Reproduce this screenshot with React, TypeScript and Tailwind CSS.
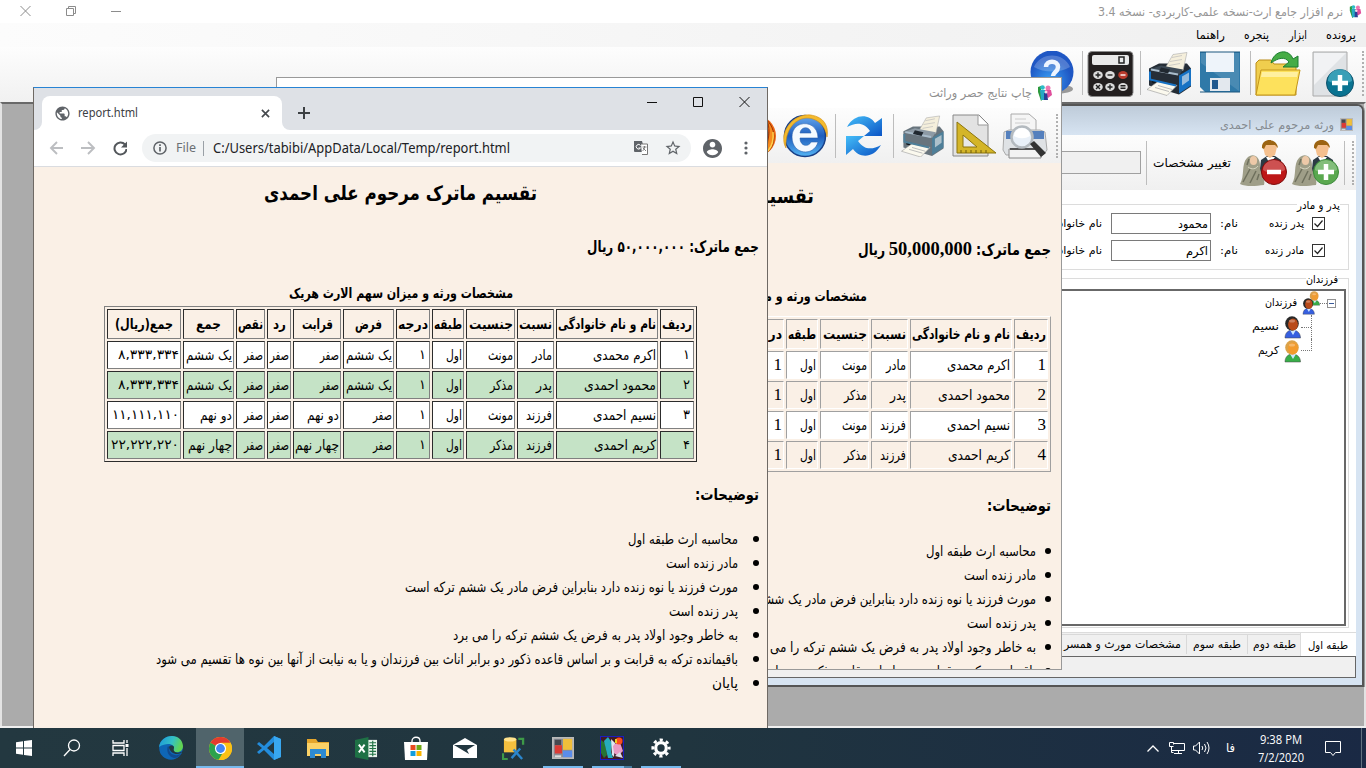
import { useLayoutEffect, useRef } from "react";
import type { ReactNode } from "react";

const FA = "font-['DejaVu_Sans',sans-serif]";

/** One line of text, condensed or stretched to a given width. */
function Fit({ w, children, cls = "", rtl = true }: { w: number; children: ReactNode; cls?: string; rtl?: boolean }) {
  const ref = useRef<HTMLSpanElement>(null);
  useLayoutEffect(() => {
    const el = ref.current;
    if (!el) return;
    el.style.transform = "none";
    const natural = el.getBoundingClientRect().width;
    if (natural > 0) el.style.transform = `scaleX(${w / natural})`;
  }, [w, children]);
  return (
    <span dir="ltr" className={`inline-flex shrink-0 items-center justify-start whitespace-nowrap ${FA} ${cls}`} style={{ width: w }}>
      <span ref={ref} dir={rtl ? "rtl" : "ltr"} className="inline-block shrink-0 origin-left">
        {children}
      </span>
    </span>
  );
}

const WIDTHS: Record<string, number> = {
  "ردیف": 30, "نام و نام خانوادگی": 98, "نسبت": 33, "جنسیت": 44, "طبقه": 28, "درجه": 30, "فرض": 27, "قرابت": 31,
  "رد": 13, "نقص": 25, "جمع": 25, "جمع(ریال)": 58, "اکرم محمدی": 63, "محمود احمدی": 72, "نسیم احمدی": 63,
  "کریم احمدی": 62, "مادر": 20, "پدر": 16, "فرزند": 26, "مونث": 25, "مذکر": 23, "اول": 16, "یک ششم": 46, "صفر": 19,
  "دو نهم": 32, "چهار نهم": 44, "۸,۳۳۳,۳۳۴": 61, "۱۱,۱۱۱,۱۱۰": 67, "۲۲,۲۲۲,۲۲۰": 68,
};
const HEAD = ["ردیف", "نام و نام خانوادگی", "نسبت", "جنسیت", "طبقه", "درجه", "فرض", "قرابت", "رد", "نقص", "جمع", "جمع(ریال)"];
const ROWS = [
  ["۱", "اکرم محمدی", "مادر", "مونث", "اول", "۱", "یک ششم", "صفر", "صفر", "صفر", "یک ششم", "۸,۳۳۳,۳۳۴"],
  ["۲", "محمود احمدی", "پدر", "مذکر", "اول", "۱", "یک ششم", "صفر", "صفر", "صفر", "یک ششم", "۸,۳۳۳,۳۳۴"],
  ["۳", "نسیم احمدی", "فرزند", "مونث", "اول", "۱", "صفر", "دو نهم", "صفر", "صفر", "دو نهم", "۱۱,۱۱۱,۱۱۰"],
  ["۴", "کریم احمدی", "فرزند", "مذکر", "اول", "۱", "صفر", "چهار نهم", "صفر", "صفر", "چهار نهم", "۲۲,۲۲۲,۲۲۰"],
];
const NOTES: [string, number][] = [
  ["محاسبه ارث طبقه اول", 110],
  ["مادر زنده است", 72],
  ["مورث فرزند یا نوه زنده دارد بنابراین فرض مادر یک ششم ترکه است", 333],
  ["پدر زنده است", 69],
  ["به خاطر وجود اولاد پدر به فرض یک ششم ترکه را می برد", 285],
  ["باقیمانده ترکه به قرابت و بر اساس قاعده ذکور دو برابر اناث بین فرزندان و یا به نیابت از آنها بین نوه ها تقسیم می شود", 582],
  ["پایان", 26],
];
const toLatin = (s: string) => String("۰۱۲۳۴۵۶۷۸۹".indexOf(s));

function ReportTable({ chrome }: { chrome: boolean }) {
  const cell = chrome
    ? "border-t-[#2c2c2c] border-l-[#2c2c2c] border-b-[#808080] border-r-[#808080]"
    : "border-t-[#a0a0a0] border-l-[#a0a0a0] border-b-white border-r-white";
  const outer = chrome
    ? "border-t-[#808080] border-l-[#808080] border-b-[#2c2c2c] border-r-[#2c2c2c]"
    : "border-t-white border-l-white border-b-[#a0a0a0] border-r-[#a0a0a0]";
  return (
    <div dir="rtl" className={`grid w-[593px] shrink-0 grid-cols-[34px_102px_37px_49px_32px_34px_51px_48px_24px_29px_51px_74px] gap-[2px] border p-[2px] ${outer}`}>
      {HEAD.map((h) => (
        <div key={h} className={`flex h-[30px] items-center justify-center border ${cell}`}>
          <Fit w={WIDTHS[h]} cls="text-[14px] font-bold">{h}</Fit>
        </div>
      ))}
      {ROWS.map((r, i) =>
        r.map((c, j) => (
          <div key={`${i}-${j}`} className={`flex h-[28px] items-center justify-start border ${c.length === 1 ? (chrome ? "pr-[3px]" : "pr-[1px]") : "pr-px"} ${cell} ${i % 2 === 0 ? "bg-white" : chrome ? "bg-[#c5e3c6]" : ""}`}>
            {c.length > 1 ? (
              <Fit w={WIDTHS[c]} cls={j === 11 ? "text-[13px]" : "text-[14px]"}>{c}</Fit>
            ) : chrome ? (
              <span className={`text-[13px] ${FA}`}>{c}</span>
            ) : (
              <span className="font-['Liberation_Serif',serif] text-[17px]">{toLatin(c)}</span>
            )}
          </div>
        )),
      )}
    </div>
  );
}

function Notes({ pad }: { pad: string }) {
  return (
    <ul dir="rtl" className={`shrink-0 ${pad}`}>
      {NOTES.map(([t, w]) => (
        <li key={t} className="flex h-[24px] items-center">
          <span className="size-[6px] shrink-0 rounded-full bg-black" />
          <Fit w={w} cls="text-[14px]">{t}</Fit>
        </li>
      ))}
    </ul>
  );
}

/* ---------- icons ---------- */
function FamilyIcon({ cls }: { cls: string }) {
  return (
    <svg viewBox="0 0 16 16" className={cls}>
      <path d="M1 2l3-1v6l2 7-2 2-3-9z" fill="#2c9a3e" />
      <circle cx="5.500" cy="2.500" r="2.300" fill="#2cbcc8" /><path d="M3 5h6v6l-2 4H4z" fill="#27a9c4" />
      <circle cx="11" cy="3" r="2.500" fill="#ec7ab2" /><path d="M8 5h6l1 5-4 3-3-3z" fill="#e04f9c" />
      <path d="M7 8h3l1 7H7z" fill="#2b3f96" /><circle cx="9" cy="7" r="1.500" fill="#fff" opacity=".8" />
    </svg>
  );
}
function Help() {
  return (
    <svg viewBox="0 0 44 44" className="h-[44px] w-[44px] shrink-0">
      <defs><radialGradient id="hb" cx=".45" cy=".7"><stop offset="0" stopColor="#3aa0f5" /><stop offset="1" stopColor="#1f57c4" /></radialGradient></defs>
      <ellipse cx="25" cy="38" rx="18" ry="5" fill="#999" /><circle cx="22" cy="21" r="21.500" fill="url(#hb)" /><path d="M4 16a19 17 0 0136 0c-10 6-26 6-36 0z" fill="#fff" opacity=".22" />
      <path d="M16 16c0-7 12-7 12 0 0 5-5 5-5 9" fill="none" stroke="#eef5ff" strokeWidth="4.500" /><circle cx="23" cy="31" r="2.600" fill="#fff" />
    </svg>
  );
}
function Calculator() {
  return (
    <svg viewBox="0 0 48 46" className="h-[46px] w-[48px] shrink-0">
      <rect x="1" y=".5" width="45" height="45" rx="4" fill="#231f1f" stroke="#8c8c8c" />
      <rect x="5" y="4" width="37" height="10" rx="2" fill="#e9e9e9" /><path d="M32 6h5v6h-5z" fill="none" stroke="#222" strokeWidth="1.500" />
      {[24, 36].map((y) => [11, 23, 36].map((x) => {
        const red = x === 36 && y === 24;
        const glyph =
          x === 11 && y === 36
            ? `M${x - 2} ${y - 2}l4 4M${x + 2} ${y - 2}l-4 4`
            : (x === 11 && y === 24) || (x === 23 && y === 36)
              ? `M${x - 2.5} ${y}h5M${x} ${y - 2.5}v5`
              : x === 36 && y === 36
                ? `M${x - 2.5} ${y - 1.2}h5M${x - 2.5} ${y + 1.2}h5`
                : `M${x - 2.5} ${y}h5`;
        return (
          <g key={`${x}${y}`}><ellipse cx={x} cy={y} rx="4.800" ry="4" fill={red ? "#b93b2d" : "#ddd"} /><path d={glyph} stroke={red ? "#fff" : "#222"} strokeWidth="1.400" /></g>
        );
      }))}
    </svg>
  );
}
function Printer({ body, side, top, cls }: { body: string; side: string; top: string; cls: string }) {
  return (
    <svg viewBox="0 0 46 44" className={cls}>
      <path d="M3 17l10-5h28l4 5v18l-12 8L3 34z" fill={body} /><path d="M33 24l12-7v17l-12 8z" fill={side} />
      <path d="M36 25l7-4v8l-7 5z" fill="#ececec" opacity=".6" />
      <path d="M19 17l8-14L41 1l-4 18z" fill="#f5efdc" stroke="#aaa" strokeWidth=".6" /><path d="M26 6l10-2M24 10l12-2M23 14l11-2" stroke="#bbb" strokeWidth=".7" />
      <path d="M3 18l12-4 22 4-4 6z" fill={top} /><path d="M5 18l27 5" stroke="#a9bccb" strokeWidth="2" /><path d="M15 16l9 2-2 4-9-2z" fill="#202830" />
      <path d="M6 28l22 5v4L6 31z" fill="#11161a" /><path d="M12 30l19 4-10 10L1 38z" fill="#fbf9ee" stroke="#999" strokeWidth=".6" /><path d="M9 36l14 4M12 34l14 4" stroke="#bbb" />
      <path d="M4 20v8l26 6" fill="none" stroke={side} strokeWidth="2" />
    </svg>
  );
}
function Floppy() {
  return (
    <svg viewBox="0 0 40 42" className="h-[42px] w-[40px] shrink-0">
      <path d="M0 1h40v40H5l-5-5z" fill="#2f79a8" /><path d="M1 2h38v38L1 12z" fill="#fff" opacity=".13" />
      <path d="M6 1h28v20H6z" fill="#eef4fa" /><path d="M10 27h20v13H10z" fill="#e3e8ee" /><path d="M12 29h6v9h-6z" fill="#1f588f" /><path d="M0 1h40M0 41h40" stroke="#1b567f" />
    </svg>
  );
}
function Folder() {
  return (
    <svg viewBox="0 0 48 45" className="h-[45px] w-[48px] shrink-0">
      <path d="M2 44V12l3-3h12l3 4h22v31z" fill="#f0ce4e" stroke="#bb8d18" /><path d="M2 44l5-25h39l-5 25z" fill="#fde15c" stroke="#c4961a" /><path d="M8 21h36l-1 5H7z" fill="#fff0a0" />
      <path d="M17 12C20-1 35-3 39 8l5-3v11H29l6-5c-4-6-11-4-18 1z" fill="#46ac46" stroke="#1d7f32" />
    </svg>
  );
}
function NewDoc() {
  return (
    <svg viewBox="0 0 42 46" className="h-[46px] w-[42px] shrink-0">
      <path d="M1 1h34v44H1z" fill="#dfe2e5" stroke="#aaa" /><path d="M2 2h32L2 34z" fill="#f1f2f4" />
      <circle cx="28" cy="32" r="13.500" fill="#0a7391" stroke="#10536d" /><path d="M16 30a12 12 0 0124 0c-7 4-17 4-24 0z" fill="#58bcd0" opacity=".6" /><path d="M28 24v16M20 32h16" stroke="#fff" strokeWidth="4.500" />
    </svg>
  );
}
function Firefox() {
  return (
    <svg viewBox="0 0 44 44" className="h-[44px] w-[44px] shrink-0">
      <circle cx="22" cy="22" r="21" fill="#ed6815" /><circle cx="20" cy="21" r="15.500" fill="#11307c" /><path d="M34 6c12 13 8 32-8 37 10-8 8-12 9-17s2-12-1-20z" fill="#f68a1d" stroke="#9f3100" /><path d="M40 18c1 8-1 14-5 19" fill="none" stroke="#ffd04d" strokeWidth="1.500" />
    </svg>
  );
}
function IE() {
  return (
    <svg viewBox="0 0 46 46" className="h-[46px] w-[46px] shrink-0">
      <defs><linearGradient id="ieg" x2="0" y2="1"><stop stopColor="#67a9ef" /><stop offset=".5" stopColor="#1e5dbd" /><stop offset="1" stopColor="#55b5f4" /></linearGradient></defs>
      <circle cx="23" cy="23" r="20.500" fill="url(#ieg)" stroke="#183f87" strokeWidth="1.500" />
      <path d="M10 24C10 6 36 6 36 25H18c0 9 9 9 11 4h7c-4 15-26 13-26-5zm8-4h11c-1-7-10-7-11 0z" fill="#f5faff" stroke="#2b62ac" strokeWidth=".6" />
      <path d="M4 35C-4 21 10 0 29 2c13 2 18 11 16 22C43 10 30 1 17 7 7 12 3 24 4 35z" fill="#f4ba2d" stroke="#d38e12" strokeWidth=".6" />
    </svg>
  );
}
function Refresh() {
  return (
    <svg viewBox="0 0 40 40" className="h-[40px] w-[40px] shrink-0">
      <defs><linearGradient id="rf" x2="1" y2="1"><stop stopColor="#44bdf8" /><stop offset="1" stopColor="#0b54c5" /></linearGradient></defs>
      <path d="M3 11C11-3 25-2 31 7l7-5v18H20l6-5C20 6 12 6 3 11z" fill="url(#rf)" /><path d="M37 29C29 43 15 42 9 33l-7 6V20h18l-6 5c6 9 14 9 23 4z" fill="url(#rf)" />
    </svg>
  );
}
function Ruler() {
  return (
    <svg viewBox="0 0 45 44" className="h-[44px] w-[45px] shrink-0">
      <path d="M1 1h26l9 9v32H1z" fill="#e2e2e2" stroke="#888" /><path d="M26 1v10h10" fill="#fff" stroke="#999" /><path d="M5 8l39 31H5z" fill="#d4b528" stroke="#8c750c" /><path d="M11 21l14 12H11z" fill="#e8e8e8" stroke="#8c750c" /><path d="M9 39v-3m5 3v-3m5 3v-3m5 3v-3m5 3v-3m5 3v-3" stroke="#6e5c0c" />
    </svg>
  );
}
function Preview() {
  return (
    <svg viewBox="0 0 46 46" className="h-[46px] w-[46px] shrink-0">
      <path d="M9 22V1h18l7 6v15z" fill="#f5f5f5" stroke="#aaa" /><path d="M13 6h11M13 10h15" stroke="#ccc" /><path d="M2 19l5-2h31l5 2 2 18-4 5H4l-3-5z" fill="#dfe2e5" stroke="#aaa" /><path d="M4 18h38v8H4z" fill="#5580bd" /><path d="M7 36h32v9H7z" fill="#f3f3f3" stroke="#888" /><path d="M8 36h30" stroke="#333" strokeWidth="1.500" />
      <circle cx="20" cy="24" r="10.500" fill="#e9f0f8" stroke="#b4babf" strokeWidth="2.500" /><path d="M12 23a8 8 0 0116 0c-5 3-11 3-16 0z" fill="#fff" /><path d="M28 31l11 13 5-4-12-12z" fill="#333" />
    </svg>
  );
}
function Couple({ plus }: { plus: boolean }) {
  return (
    <svg viewBox="0 0 48 46" className="h-[46px] w-[48px] shrink-0">
      <path d="M20 37l2-17 6-4h8l6 4 1 17z" fill="#2c3a44" /><path d="M27 17l4 7 5-7z" fill="#fff" /><path d="M24 7c1-5 13-5 14 0l-2 8-5 3-5-3z" fill="#f5c08e" /><path d="M23 8c-1-10 15-11 16 0l-3-3-9 0-2 4z" fill="#9c6412" />
      <path d="M1 44c5-8 1-20 7-26 6-6 13-1 13 7-1 8 6 13 4 20-8 1-18 2-24-1z" fill="#9f9e88" /><ellipse cx="14.500" cy="20.500" rx="3.600" ry="4.500" fill="#edc9a8" /><path d="M4 42l7-13M11 43l6-12M8 25l2-6M18 40l2-6" stroke="#6f705d" strokeWidth="1.500" /><path d="M9 27c4 3 8 2 10-1" fill="none" stroke="#d5d4bf" />
      <circle cx="35" cy="32" r="12.500" fill={plus ? "#5aa84f" : "#bd1717"} stroke={plus ? "#3d8a3c" : "#7d0c0c"} /><path d="M24 30a11 10 0 0122 0c-7 4-16 4-22 0z" fill="#fff" opacity=".25" /><path d={plus ? "M35 24v16M27 32h16" : "M28 32h14"} stroke="#fff" strokeWidth="4.500" />
    </svg>
  );
}
function Person({ skin, hair, shirt, cls }: { skin: string; hair: string; shirt: string; cls: string }) {
  return (
    <svg viewBox="0 0 17 23" className={cls}>
      <path d="M1 22c0-5 3-8 7.500-8s8 3 8 8z" fill={shirt} stroke="#444" strokeWidth=".5" /><path d="M6 14l3 5 3-5z" fill="#cce6ff" /><ellipse cx="8" cy="7.500" rx="6.800" ry="7.200" fill={hair} /><ellipse cx="9" cy="8.500" rx="4.900" ry="6" fill={skin} /><ellipse cx="8" cy="5" rx="3" ry="1.500" fill="#fff" opacity=".3" />
    </svg>
  );
}
function FormIcon({ cls }: { cls: string }) {
  return (
    <svg viewBox="0 0 24 24" className={cls}>
      <path d="M1 1h22v22H1z" fill="#8a8d96" stroke="#b9b9b9" strokeWidth="2" /><path d="M3 3h7v6H3z" fill="#46484f" /><path d="M12 2h10v12H12z" fill="#f0bf3a" /><path d="M3 9h8v9H3z" fill="#dc3b35" /><path d="M12 15h10v7H12z" fill="#5b8dea" /><path d="M3 20h7v2H3z" fill="#ddd" />
    </svg>
  );
}

function Sep({ cls }: { cls: string }) {
  return <div className={`w-px shrink-0 bg-[#bdbdbd] ${cls}`} />;
}
function Grip({ cls }: { cls: string }) {
  return <div className={`w-0 shrink-0 border-r-2 border-dotted border-[#b0b0b0] ${cls}`} />;
}

/* ---------- main application ---------- */
function MainWindow() {
  return (
    <div className="absolute inset-x-0 top-0 flex h-[728px] flex-col bg-white">
      <div dir="rtl" className="flex h-[23px] shrink-0 items-center pr-[4px]">
        <FamilyIcon cls="h-[15px] w-[13px] shrink-0" />
        <Fit w={245} cls="mr-[6px] text-[12px] text-[#969696]">نرم افزار جامع ارث-نسخه علمی-کاربردی- نسخه 3.4</Fit>
        <svg viewBox="0 0 104 14" className="mr-auto ml-[19px] h-[14px] w-[104px] -translate-y-[1px]" fill="none" stroke="#8c8c8c">
          <path d="M1.500 2l10 10m0-10l-10 10M92 7.500h10M47.500 4.500h7v7h-7zM49.500 4.500v-2h7v7h-2" />
        </svg>
      </div>
      <div dir="rtl" className="flex h-[24px] shrink-0 items-center bg-linear-to-r from-[#fcfcfc] to-[#efefef] pr-[10px] text-[12px]">
        <Fit w={30}>پرونده</Fit>
        <Fit w={18} cls="mr-[19px]">ابزار</Fit>
        <Fit w={25} cls="mr-[20px]">پنجره</Fit>
        <Fit w={29} cls="mr-[19px]">راهنما</Fit>
      </div>
      <div dir="rtl" className="flex h-[55px] shrink-0 items-start bg-linear-to-b from-[#fdfdfd] to-[#f1f1f1] pt-[4px] pr-[2px]">
        <Grip cls="h-[45px]" />
        <div className="mr-[8px] flex"><NewDoc /></div>
        <div className="mr-[10px] flex"><Folder /></div>
        <Sep cls="mr-[3px] h-[44px]" />
        <div className="mr-[10px] flex"><Floppy /></div>
        <Printer body="#252d36" side="#1672c4" top="#3b4854" cls="mr-[8px] h-[45px] w-[46px] shrink-0" />
        <Sep cls="mr-[5px] h-[44px]" />
        <div className="mr-[5px] flex"><Calculator /></div>
        <Sep cls="mr-[4px] h-[44px]" />
        <div className="mr-[8px] flex"><Help /></div>
      </div>
      <div className="min-h-0 flex-1 border-t-2 border-r-2 border-l-2 border-t-[#696969] border-r-[#e3e3e3] border-l-[#e3e3e3] bg-[#ababab]" />
      <div className="h-[2px] shrink-0 bg-[#efefef]" />
    </div>
  );
}

function Field({ label, lw, value, vw }: { label: string; lw: number; value: string; vw: number }) {
  return (
    <div className="flex h-[27px] items-center text-[11px]">
      <div className="flex size-[13px] shrink-0 items-center justify-center border border-[#333] bg-white">
        <svg viewBox="0 0 11 11" className="size-[11px]"><path d="M1.500 5.500l3 3 5-6" fill="none" stroke="#222" strokeWidth="1.200" /></svg>
      </div>
      <Fit w={lw} cls="mr-[8px] pt-px">{label}</Fit>
      <div className="mr-auto flex items-center">
        <Fit w={18} cls="pt-px">نام:</Fit>
        <div className="mr-[9px] flex h-[21px] w-[100px] shrink-0 items-center border border-[#7a7a7a] bg-white pr-[2px]">
          <Fit w={vw} cls="text-[12px]">{value}</Fit>
        </div>
        <Fit w={62} cls="mr-[9px] pt-px">نام خانوادگی:</Fit>
      </div>
    </div>
  );
}

function Legend({ w, children }: { w: number; children: string }) {
  return (
    <div className="flex h-px items-center pr-[8px]">
      <Fit w={w} cls="bg-white text-[11px] leading-[14px]">{children}</Fit>
    </div>
  );
}

function HeirsWindow() {
  const tabs: [string, number, string][] = [
    ["طبقه دوم", 43, "w-[53px] pr-[4px]"],
    ["طبقه سوم", 48, "w-[61px] pr-[6px]"],
    ["مشخصات مورث و همسر", 117, "w-[140px] pr-[5px]"],
  ];
  return (
    <div dir="rtl" className="absolute top-[104px] left-[700px] flex h-[583px] w-[664px] flex-col rounded-tr-[7px] border-2 border-l-0 border-[#555] bg-[#d7e4f2] pr-[6px] pb-[7px] shadow-[1px_0_0_#999]">
      <div className="-mr-[6px] flex h-[29px] shrink-0 items-center rounded-tr-[5px] bg-linear-to-b from-[#becbd9] to-[#d7e4f2] pt-[8px] pr-[9px]">
        <FormIcon cls="size-[13px] shrink-0" />
        <Fit w={114} cls="mr-[6px] text-[12px] text-[#858b91]">ورثه مرحوم علی احمدی</Fit>
      </div>
      <div className="flex min-h-0 flex-1 flex-col bg-white">
        <div className="flex h-[55px] shrink-0 items-center bg-linear-to-b from-[#fdfdfd] to-[#f0f0f0] pr-[2px]">
          <Grip cls="h-[44px]" />
          <Sep cls="mr-[7px] h-[44px]" />
          <div className="mr-[5px] flex"><Couple plus /></div>
          <div className="mr-[4px] flex"><Couple plus={false} /></div>
          <Fit w={78} cls="mr-[8px] text-[12px]">تغییر مشخصات</Fit>
          <Sep cls="mr-[6px] h-[44px]" />
          <div className="mr-[5px] h-[23px] flex-1 border border-[#a0a0a0] bg-[#f0f0f0]" />
        </div>
        <div className="mt-[14px] mr-[7px] h-[66px] shrink-0 border border-[#dcdcdc]">
          <Legend w={43}>پدر و مادر</Legend>
          <div className="w-[308px] pt-[4px] pr-[23px]">
            <Field label="پدر زنده" lw={35} value="محمود" vw={30} />
            <Field label="مادر زنده" lw={39} value="اکرم" vw={22} />
          </div>
        </div>
        <div className="mt-[8px] mr-[7px] h-[350px] shrink-0 border border-[#dcdcdc] pr-[2px]">
          <Legend w={32}>فرزندان</Legend>
          <div className="mt-[9px] h-[337px] border-2 border-[#686868] pr-[8px] text-[11px]">
            <div className="flex h-[24px] items-center">
              <div className="flex size-[9px] shrink-0 items-center justify-center border border-[#919191]"><div className="h-px w-[5px] bg-[#3a5a9a]" /></div>
              <div className="w-[7px] border-t border-dotted border-[#777]" />
              <div className="relative h-[24px] w-[18px] shrink-0">
                <Person skin="#ef9c32" hair="#d9a14c" shirt="#38ae49" cls="absolute top-0 right-0 h-[15px] w-[11px]" />
                <Person skin="#b94a19" hair="#292929" shirt="#365fe0" cls="absolute bottom-0 left-0 h-[17px] w-[13px]" />
              </div>
              <Fit w={32} cls="mr-[5px]">فرزندان</Fit>
            </div>
            <div className="mr-[24px]">
              <div className="flex h-[24px] items-center border-r border-dotted border-[#777]">
                <div className="w-[10px] border-t border-dotted border-[#777]" />
                <Person skin="#b94a19" hair="#292929" shirt="#365fe0" cls="h-[23px] w-[17px] shrink-0" />
                <Fit w={27} cls="mr-[5px]">نسیم</Fit>
              </div>
              <div className="flex h-[24px] items-center">
                <div className="h-[12px] w-[11px] self-start border-r border-b border-dotted border-[#777]" />
                <Person skin="#f39b2c" hair="#dca248" shirt="#38ae49" cls="h-[23px] w-[17px] shrink-0" />
                <Fit w={21} cls="mr-[5px]">کریم</Fit>
              </div>
            </div>
          </div>
        </div>
        <div className="mt-[4px] flex h-[24px] shrink-0 items-end border-t border-[#dcdcdc] bg-[#f0f0f0] text-[11px]">
          <div className="flex h-[23px] w-[56px] shrink-0 items-center border-l border-[#dcdcdc] bg-white pt-[4px] pr-[8px]"><Fit w={40}>طبقه اول</Fit></div>
          {tabs.map(([t, w, c]) => (
            <div key={t} className={`mb-[2px] flex h-[20px] shrink-0 items-center border-t border-l border-[#d9d9d9] pt-[2px] ${c}`}><Fit w={w}>{t}</Fit></div>
          ))}
        </div>
        <div className="min-h-0 flex-1 border border-[#666] bg-[#f0f0f0]" />
      </div>
    </div>
  );
}

function PrintWindow() {
  return (
    <div className="absolute top-[77px] left-[276px] flex h-[593px] w-[786px] flex-col overflow-hidden border border-[#999] bg-[#faf0e6]">
      <div dir="rtl" className="flex h-[30px] shrink-0 items-center bg-white pr-[8px]">
        <FamilyIcon cls="size-[16px] shrink-0" />
        <Fit w={103} cls="mr-[5px] text-[12px] text-[#8f8f8f]">چاپ نتایج حصر وراثت</Fit>
      </div>
      <div dir="rtl" className="flex h-[55px] shrink-0 items-center bg-linear-to-b from-[#fdfdfd] to-[#f0f0f0] pr-[3px]">
        <Grip cls="h-[44px]" />
        <div className="mr-[8px] flex"><Preview /></div>
        <div className="mr-[5px] flex"><Ruler /></div>
        <Printer body="#68747d" side="#4e7f99" top="#8d9aa5" cls="mr-[7px] h-[42px] w-[45px] shrink-0" />
        <Sep cls="mr-[6px] h-[44px]" />
        <div className="mr-[9px] flex"><Refresh /></div>
        <Sep cls="mr-[8px] h-[44px]" />
        <div className="mr-[7px] flex"><IE /></div>
        <div className="mr-[5px] flex"><Firefox /></div>
      </div>
      <div dir="rtl" className="flex h-[66px] shrink-0 items-center justify-center"><Fit w={289} cls="text-[20px] font-bold">تقسیم ماترک مرحوم علی احمدی</Fit></div>
      <div dir="rtl" className="flex h-[40px] shrink-0 items-center gap-[4px] pt-px pr-[10px]">
        <Fit w={75} cls="text-[16px] font-bold">جمع ماترک:</Fit>
        <span className="font-['Liberation_Serif',serif] text-[18.500px] font-bold">50,000,000</span>
        <Fit w={27} cls="text-[16px] font-bold">ریال</Fit>
      </div>
      <div dir="rtl" className="flex flex-col items-start pr-[10px]">
        <div className="flex h-[47px] w-[593px] items-center justify-center pt-[7px]"><Fit w={225} cls="text-[14px] font-bold">مشخصات ورثه و میزان سهم الارث هریک</Fit></div>
        <ReportTable chrome={false} />
      </div>
      <div dir="rtl" className="flex h-[67px] shrink-0 items-center pr-[10px]"><Fit w={64} cls="text-[16px] font-bold">توضیحات:</Fit></div>
      <Notes pad="pr-[10px] [&_li]:gap-[9px]" />
    </div>
  );
}

/* ---------- browser ---------- */
function Browser() {
  return (
    <div className="absolute top-[87px] left-[33px] flex h-[641px] w-[735px] flex-col overflow-hidden border border-b-0 border-[#6e6964] border-t-[#2783d4] bg-[#faf0e6]">
      <div className="flex h-[42px] shrink-0 items-end bg-[#dee1e6]">
        <div className="h-[8px] w-[8px] bg-white"><div className="size-full rounded-br-[8px] bg-[#dee1e6]" /></div>
        <div className="flex h-[34px] w-[240px] items-center rounded-t-[8px] bg-white pl-[13px]">
          <svg viewBox="0 0 24 24" className="-ml-[1px] size-[17px] shrink-0"><path fill="#5f6368" d="M12 2C6.480 2 2 6.480 2 12s4.480 10 10 10 10-4.480 10-10S17.520 2 12 2zm-1 17.930c-3.950-.49-7-3.850-7-7.930 0-.62.08-1.210.21-1.790L9 15v1c0 1.100.9 2 2 2v1.930zm6.900-2.540c-.26-.81-1-1.390-1.900-1.390h-1v-3c0-.55-.45-1-1-1H8v-2h2c.55 0 1-.45 1-1V7h2c1.100 0 2-.9 2-2v-.41c2.930 1.190 5 4.060 5 7.410 0 2.080-.8 3.970-2.100 5.390z" /></svg>
          <Fit w={60} rtl={false} cls="ml-[7px] text-[12px] text-[#3c4043] font-['Noto_Sans',sans-serif]!">report.html</Fit>
          <svg viewBox="0 0 10 10" className="mr-[12px] ml-auto size-[9px]" stroke="#45494d" strokeWidth="1.800"><path d="M1 1l8 8M9 1L1 9" /></svg>
        </div>
        <div className="h-[8px] w-[8px] bg-white"><div className="size-full rounded-bl-[8px] bg-[#dee1e6]" /></div>
        <svg viewBox="0 0 12 12" className="mb-[11px] ml-[8px] size-[12px]" stroke="#3c4043" strokeWidth="2"><path d="M6 0v12M0 6h12" /></svg>
        <svg viewBox="0 0 104 12" className="mr-[16px] mb-[22px] ml-auto h-[12px] w-[104px]" fill="none" stroke="#111"><path d="M0 6.500h10M46.500 1.500h9v9h-9zM92.500 1l10 10M102.500 1l-10 10" /></svg>
      </div>
      <div className="flex h-[36px] shrink-0 items-center bg-white pl-[15px]">
        <svg viewBox="0 0 78 16" className="h-[16px] w-[78px] shrink-0" fill="none" stroke="#bcbec1" strokeWidth="1.900">
          <path d="M14 8H2M8 2L2 8l6 6M32 8h13M39 2l6 6-6 6" /><path d="M76 4.500A6 6 0 1077.500 9" stroke="#53575b" strokeWidth="2" /><path d="M72 7.500h6v-6z" fill="#53575b" stroke="none" />
        </svg>
        <div className="ml-[15px] flex h-[28px] w-[549px] shrink-0 items-center rounded-full bg-[#f1f3f4] pl-[11px]">
          <svg viewBox="0 0 14 14" className="size-[14px]" fill="none" stroke="#5f6368" strokeWidth="1.500"><circle cx="7" cy="7" r="6.100" /><path d="M7 6v4.500M7 3.300v1.600" strokeWidth="1.700" /></svg>
          <Fit w={20} rtl={false} cls="ml-[9px] text-[13px] text-[#6b6f73] font-['Noto_Sans',sans-serif]!">File</Fit>
          <div className="ml-[7px] h-[15px] w-px bg-[#9aa0a6]" />
          <Fit w={297} rtl={false} cls="ml-[9px] text-[13.500px] text-[#202124] font-['Noto_Sans',sans-serif]!">C:/Users/tabibi/AppData/Local/Temp/report.html</Fit>
          <svg viewBox="0 0 16 16" className="ml-auto size-[16px] shrink-0"><path d="M1 1h8l3 11H2a1 1 0 01-1-1z" fill="#5f6368" /><path d="M8 4h6.500v10.500H9" fill="#fff" stroke="#777" /><path d="M7.500 5.500A2.300 2.300 0 107.500 8H5.500" fill="none" stroke="#fff" /><path d="M9.500 7h4M11.500 6v1c0 2-1 3-2 4M10 8c1 1 2 2 3 3" fill="none" stroke="#666" strokeWidth=".8" /></svg>
          <svg viewBox="0 0 24 24" className="mr-[9px] ml-[15px] size-[18px] shrink-0" fill="#5f6368"><path d="M22 9.240l-7.190-.62L12 2 9.190 8.630 2 9.240l5.460 4.730L5.820 21 12 17.270 18.180 21l-1.630-7.030L22 9.240zM12 15.400l-3.760 2.270 1-4.280-3.320-2.880 4.380-.38L12 6.100l1.710 4.040 4.380.38-3.320 2.880 1 4.280L12 15.400z" /></svg>
        </div>
        <svg viewBox="2 2 20 20" className="ml-[12px] size-[19px] shrink-0" fill="#5f6368"><path d="M12 2C6.480 2 2 6.480 2 12s4.480 10 10 10 10-4.480 10-10S17.520 2 12 2zm0 3c1.660 0 3 1.340 3 3s-1.340 3-3 3-3-1.340-3-3 1.340-3 3-3zm0 14.200c-2.500 0-4.710-1.280-6-3.220.03-1.990 4-3.080 6-3.080 1.990 0 5.970 1.090 6 3.080-1.290 1.940-3.500 3.220-6 3.220z" /></svg>
        <svg viewBox="0 0 4 14" className="ml-[22px] h-[14px] w-[4px]" fill="#5f6368"><circle cx="2" cy="2" r="1.600" /><circle cx="2" cy="7" r="1.600" /><circle cx="2" cy="12" r="1.600" /></svg>
      </div>
      <div className="h-px shrink-0 bg-[#dadce0]" />
      <div dir="rtl" className="flex h-[52px] shrink-0 items-center justify-center"><Fit w={273} cls="text-[20px] font-bold">تقسیم ماترک مرحوم علی احمدی</Fit></div>
      <div dir="rtl" className="flex h-[56px] shrink-0 items-center pr-[8px]"><Fit w={172} cls="text-[16px] font-bold">جمع ماترک: ۵۰,۰۰۰,۰۰۰ ریال</Fit></div>
      <div className="flex h-[31px] shrink-0 items-center justify-center pt-[5px]"><Fit w={224} cls="text-[14px] font-bold">مشخصات ورثه و میزان سهم الارث هریک</Fit></div>
      <div className="flex shrink-0 justify-center"><ReportTable chrome /></div>
      <div dir="rtl" className="flex h-[65px] shrink-0 items-center pr-[8px]"><Fit w={64} cls="text-[16px] font-bold">توضیحات:</Fit></div>
      <Notes pad="pr-[8px] [&_li]:gap-[15px]" />
    </div>
  );
}

/* ---------- taskbar ---------- */
function Slot({ cls = "", bar = "", children }: { cls?: string; bar?: string; children: ReactNode }) {
  return (
    <div className={`flex h-[40px] w-[49px] shrink-0 flex-col items-center ${cls}`}>
      <div className="flex flex-1 items-center pt-[2px]">{children}</div>
      <div className={`h-[2px] shrink-0 ${bar}`} />
    </div>
  );
}

function Taskbar() {
  return (
    <div className="absolute inset-x-0 bottom-0 flex h-[40px] items-center bg-linear-to-r from-[#233840] via-[#20353f] to-[#1a2944]">
      <Slot cls="w-[47px]!"><svg viewBox="0 0 16 16" className="size-[16px]" fill="#fff"><path d="M0 2.200l7-1v6.300H0zM8 1l8-1v7.500H8zM0 8.500h7v6.300l-7-1zM8 8.500h8V16l-8-1z" /></svg></Slot>
      <Slot><svg viewBox="0 0 18 18" className="size-[18px]" fill="none" stroke="#fff" strokeWidth="1.300"><circle cx="11" cy="6.500" r="5.500" /><path d="M7 10.500L1 17" /></svg></Slot>
      <Slot><svg viewBox="0 0 18 16" className="h-[16px] w-[18px]" fill="none" stroke="#fff" strokeWidth="1.300"><path d="M1 0v3h11V0M1 5.500h11v5H1zM1 16v-3h11v3M15 0v3M15 8v8" /><path d="M13.500 4h3v3h-3z" fill="#fff" stroke="none" /></svg></Slot>
      <Slot cls="w-[51px]!">
        <svg viewBox="0 0 24 24" className="size-[24px]">
          <defs><linearGradient id="eg" x2="1" y2=".3"><stop stopColor="#1a96dc" /><stop offset=".6" stopColor="#35c1c4" /><stop offset="1" stopColor="#61d452" /></linearGradient></defs>
          <circle cx="12" cy="12" r="11.800" fill="#0e66b5" /><path d="M0 11C2-3 23-4 24 10c0 5-4 7-8 6-3-1-2-3-1-4 0-4-7-6-15-1z" fill="url(#eg)" /><path d="M9 10c-2 4 0 11 6 12 3 0 6-2 7-4-6 3-13 0-12-7z" fill="#114a8e" /><path d="M10 11c1-2 4-2 5 0 0 2-1 3 1 5 2 1 5 1 8-1-3 5-13 4-14-4z" fill="#223740" />
        </svg>
      </Slot>
      <Slot cls="bg-[#50646b] w-[48px]!" bar="w-full bg-[#76b9ed]">
        <svg viewBox="0 0 24 24" className="size-[23px]"><circle cx="12" cy="12" r="12" fill="#fbc116" /><path d="M12 12L1.600 6A12 12 0 0122.400 6z" fill="#e33b2e" /><path d="M12 12L1.600 6A12 12 0 0010 23.800L16.500 13z" fill="#2ca24c" /><path d="M12 6h10.400A12 12 0 0112 24l4-9z" fill="#fbc116" /><circle cx="12" cy="12" r="5.800" fill="#fff" /><circle cx="12" cy="12" r="4.600" fill="#4285f4" /></svg>
      </Slot>
      <Slot><svg viewBox="0 0 24 24" className="size-[24px]"><path d="M17 0l7 3v18l-7 3L7 14l-5 4-2-2 5-4-5-4 2-2 5 4zM17 6l-7 6 7 6z" fill="#238ddd" fillRule="evenodd" /><path d="M17 0l7 3v18l-7 3z" fill="#38a7f0" /></svg></Slot>
      <Slot><svg viewBox="0 0 22 20" className="h-[20px] w-[22px]"><path d="M0 1h9l2 3h11v14H0z" fill="#e5a62c" /><path d="M0 5h22v13H0z" fill="#fbd267" /><path d="M3 11h16v9h-5v-4H8v4H3z" fill="#2d8bd2" /></svg></Slot>
      <Slot><svg viewBox="0 0 24 24" className="size-[23px]"><path d="M13 3h10v18H13z" fill="#e9f3ec" /><path d="M15 6h7M15 9h7M15 12h7M15 15h7M15 18h7M18.500 4v16" stroke="#217346" strokeWidth="1.200" /><path d="M0 3l14-3v24L0 21z" fill="#1e7145" /><path d="M4 8l6 8M10 8l-6 8" stroke="#fff" strokeWidth="2" /></svg></Slot>
      <Slot><svg viewBox="0 0 24 24" className="size-[24px]"><path d="M8 8V5c0-5 8-5 8 0v3" fill="none" stroke="#fff" strokeWidth="1.300" /><path d="M0 6h24l-1 18H1z" fill="#fff" /><path d="M6.500 9h5v5h-5z" fill="#e94b20" /><path d="M12.500 9h5v5h-5z" fill="#70a917" /><path d="M6.500 15h5v5h-5z" fill="#129dde" /><path d="M12.500 15h5v5h-5z" fill="#f9b400" /></svg></Slot>
      <Slot><svg viewBox="0 0 24 20" className="h-[20px] w-[24px]"><path d="M0 7l12-7 12 7v13H0z" fill="#fff" /><path d="M1 7h21l-8 5 2 4-5-3z" fill="#223740" /></svg></Slot>
      <Slot><svg viewBox="0 0 24 24" className="size-[23px]"><path d="M2 2h13v14H2z" fill="#f3bf3f" /><ellipse cx="8.500" cy="2.500" rx="6.500" ry="2.300" fill="#ffe28c" /><path d="M17 2h5v6M1 17v6h5" fill="none" stroke="#3e9a48" strokeWidth="2.400" /><path d="M10 22l9-10M12 13l9 10" stroke="#2b86cd" strokeWidth="2.500" /></svg></Slot>
      <Slot bar="w-[40px] bg-[#76b9ed]"><FormIcon cls="size-[22px]" /></Slot>
      <Slot bar="w-[40px] border-r-8 border-[#477c9f] bg-[#76b9ed]"><div className="border border-[#1c1cc0] bg-[#411c25]"><svg viewBox="0 0 22 22" className="size-[22px]"><path d="M0 3l4 3 2 12-3 3-3-5z" fill="#277433" /><path d="M3 4l4-4 4 6-1 9 2 6H7z" fill="#26acbc" /><path d="M10 2l4 4-1 14-2-2z" fill="#dfe6f2" /><path d="M12 9l6-6 4 11-5 5-4-3z" fill="#e99ac4" /><circle cx="18" cy="4" r="3.500" fill="#fc4b1d" /><path d="M14 2h2v4h-2z" fill="#edce22" /><path d="M14 19l5-4 3 6z" fill="#d9dde8" /></svg></div></Slot>
      <Slot bar="w-[40px] bg-[#76b9ed]"><svg viewBox="0 0 20 20" className="size-[20px]"><circle cx="10" cy="10" r="5.300" fill="none" stroke="#fff" strokeWidth="3.200" /><circle cx="10" cy="10" r="8.200" fill="none" stroke="#fff" strokeWidth="2.800" strokeDasharray="3.220 3.220" strokeDashoffset="1.610" /></svg></Slot>
      <div className="ml-auto flex h-full items-center">
        <svg viewBox="0 0 12 7" className="h-[7px] w-[12px]" fill="none" stroke="#fff" strokeWidth="1.300"><path d="M.5 6.500L6 1l5.500 5.500" /></svg>
        <svg viewBox="0 0 17 14" className="ml-[10px] h-[14px] w-[17px]" fill="none" stroke="#fff"><path d="M4.500 3.500v-2h-4v4h4M4.500 2.500h11v7h-13v-4M9.500 9.500v3M5 12.500h8" /><path d="M2.500 5.500v6h2" /></svg>
        <svg viewBox="0 0 17 14" className="ml-[7px] h-[14px] w-[17px]" fill="none" stroke="#fff"><path d="M.5 5v4h2l4 4V1l-4 4zM9 5q1.500 2 0 4M11.500 3q3 4 0 8M14 1q4 6 0 12" /></svg>
        <Fit w={9} cls="ml-[16px] text-[12px] text-white">فا</Fit>
        <div className="ml-[23px] flex flex-col items-center gap-[3px] text-[12px] leading-[15px] text-white">
          <Fit w={42} rtl={false} cls="font-['Open_Sans',sans-serif]!">9:38 PM</Fit>
          <Fit w={46} rtl={false} cls="font-['Open_Sans',sans-serif]!">7/2/2020</Fit>
        </div>
        <svg viewBox="0 0 17 17" className="ml-[21px] h-[17px] w-[17px]" fill="none" stroke="#fff"><path d="M.5 1.500h15v11h-5l-2.500 3-2.500-3h-5z" /></svg>
        <div className="mr-[4px] ml-[19px] h-full w-px bg-[#60717f]" />
      </div>
    </div>
  );
}

export default function App() {
  return (
    <div className="relative h-[768px] w-[1366px] overflow-hidden bg-white text-black">
      <MainWindow />
      <HeirsWindow />
      <PrintWindow />
      <Browser />
      <Taskbar />
    </div>
  );
}
